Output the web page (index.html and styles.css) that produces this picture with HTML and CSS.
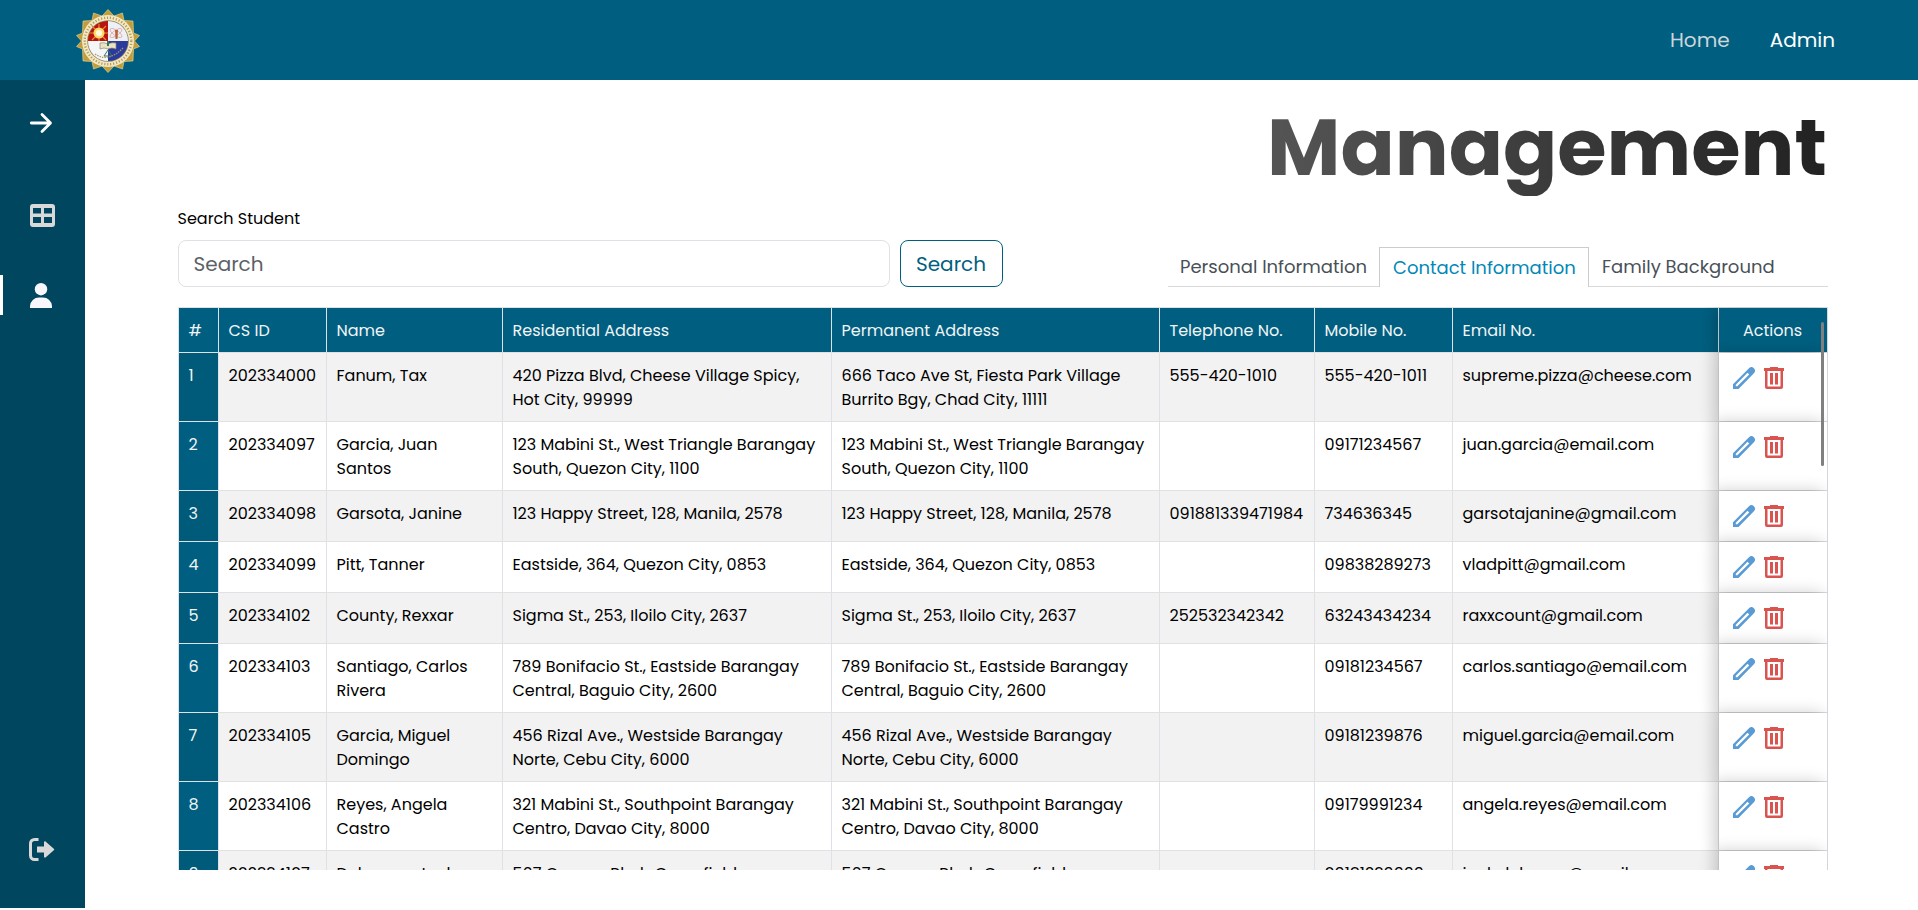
FILE: index.html
```html
<!DOCTYPE html>
<html lang="en">
<head>
<meta charset="utf-8">
<title>Management</title>
<link rel="stylesheet" href="styles.css">
</head>
<body>
<svg class="defs" aria-hidden="true">
  <symbol id="pencil" viewBox="0 0 24 24"><path fill="currentColor" fill-rule="evenodd" d="M1 18.3 17 2.200a3.600 3.600 0 0 1 4.900 0 3.600 3.600 0 0 1 0 5L6.500 23H1ZM3.800 20.200h1.500L17.200 8.500 15.500 6.800 3.800 18.700Z"/></symbol>
  <symbol id="trash" viewBox="0 0 24 24"><path fill="currentColor" fill-rule="evenodd" d="M8 1h8v1h6v3h-1v16a2 2 0 0 1-2 2H5a2 2 0 0 1-2-2V5H2V2h6ZM5.500 5v15.500h13V5ZM8 7h3v11.500H8Zm5 0h3v11.500h-3Z"/></symbol>
</svg>
<header class="topbar">
  <svg class="logo" viewBox="-32 -32 64 64">
    <polygon class="rays" points="0,-31.500 6,-25 14.500,-28 16,-20.500 25,-20 25.500,-8 31.500,-5.500 26.500,0 31.500,5.500 25.500,8 25,20 16,20.500 14.500,28 6,25 0,31.500 -6,25 -14.500,28 -16,20.500 -25,20 -25.500,8 -31.500,5.500 -26.500,0 -31.500,-5.500 -25.500,-8 -25,-20 -16,-20.500 -14.500,-28 -6,-25"/>
    <circle r="26" fill="#f3e8c5"/>
    <circle r="23.300" class="lettering"/>
    <circle r="20.800" fill="#8d8460"/>
    <path d="M0 0H-20A20 20 0 0 1 0-20Z" fill="#b8130c"/>
    <path d="M0 0V-20A20 20 0 0 1 20 0Z" fill="#eef0f5"/>
    <path d="M0 0H20A20 20 0 0 1 0 20Z" fill="#2b3a9d"/>
    <path d="M0 0V20A20 20 0 0 1-20 0Z" fill="#f5f6f8"/>
    <path d="M-9-17V0M-19-8H0M-16-15-2-1M-2-15-16-1" stroke="#e38b35" stroke-width="1.200"/>
    <circle cx="-9" cy="-8" r="5.500" fill="#ffd96e"/><circle cx="-9" cy="-8" r="3" fill="#fffbe0"/>
    <g fill="none" stroke="#dba6a6" stroke-width=".8"><ellipse cx="8" cy="-8" rx="7" ry="2.600" transform="rotate(35 8 -8)"/><ellipse cx="8" cy="-8" rx="7" ry="2.600" transform="rotate(-35 8 -8)"/></g>
    <path d="M7-11h3l-.5 9h-2Z" fill="#b5623a"/>
    <path d="M-8 2Q-4 1 0 3 4 1 8 2V8Q4 6 0 8-4 6-8 8Z" fill="#e9e3c3" stroke="#8b8b68" stroke-width=".7"/>
    <path d="M-1 0h2v5h-2Z" fill="#387460"/>
    <path d="M-4 15 0 9 4 15Z" fill="none" stroke="#387460" stroke-width="1"/>
    <path d="M-13 13Q0 22 15 7" fill="none" stroke="#a69a68" stroke-width="1.200" stroke-dasharray="1.500 1"/>
  </svg>
  <nav class="topnav"><a class="home">Home</a><a class="admin">Admin</a></nav>
</header>
<div class="body">
  <aside class="sidebar">
    <svg class="ico arrow" viewBox="0 0 22 20"><path d="M1.300 10H20M12 1.500 20.500 10 12 18.500" fill="none" stroke="#fff" stroke-width="2.800" stroke-linecap="round" stroke-linejoin="round"/></svg>
    <svg class="ico grid" viewBox="0 0 25 23"><path d="M3 0h19a3 3 0 0 1 3 3v17a3 3 0 0 1-3 3H3a3 3 0 0 1-3-3V3a3 3 0 0 1 3-3ZM3 4v5.500h8V4Zm11 0v5.500h8V4ZM3 13v6h8v-6Zm11 0v6h8v-6Z" fill="#d9d9d9" fill-rule="evenodd"/></svg>
    <div class="current"><svg class="ico" viewBox="0 0 22 25"><circle cx="11" cy="6.200" r="6.200" fill="#f8f8fc"/><path d="M0 25V23A9 9 0 0 1 9 14.500h4A9 9 0 0 1 22 23v2Z" fill="#f8f8fc"/></svg></div>
    <svg class="ico logout" viewBox="0 0 26 23"><path d="M9.500 1.500H5.500a4 4 0 0 0-4 4v12a4 4 0 0 0 4 4h4" fill="none" stroke="#d9d9d9" stroke-width="3"/><path d="M8 8.500h7V4.500c0-1 1-1.500 1.800-.8l8 7a1 1 0 0 1 0 1.600l-8 7c-.8.700-1.800.200-1.800-.8v-4H8Z" fill="#d9d9d9"/></svg>
  </aside>
  <main class="main">
    <h1 class="title"><span>Management</span></h1>
    <div class="tools">
      <div class="search">
        <label class="label" for="q">Search Student</label>
        <div class="row"><input id="q" class="input" placeholder="Search"><button class="btn">Search</button></div>
      </div>
      <div class="tabs"><a class="tab t1">Personal Information</a><a class="tab t2">Contact Information</a><a class="tab t3">Family Background</a></div>
    </div>
    <div class="tablebox">
      <table class="table">
        <colgroup><col class="c1"><col class="c2"><col class="c3"><col class="c4"><col class="c5"><col class="c6"><col class="c7"><col class="c8"><col class="c9"></colgroup>
        <thead><tr><th>#</th><th>CS ID</th><th>Name</th><th>Residential Address</th><th>Permanent Address</th><th>Telephone No.</th><th>Mobile No.</th><th>Email No.</th><th class="act">Actions</th></tr></thead>
        <tbody>
        <tr><th>1</th><td>202334000</td><td>Fanum, Tax</td><td>420 Pizza Blvd, Cheese Village Spicy,<br>Hot City, 99999</td><td>666 Taco Ave St, Fiesta Park Village<br>Burrito Bgy, Chad City, 11111</td><td>555-420-1010</td><td>555-420-1011</td><td>supreme.pizza@cheese.com</td><td class="act"><svg class="edit"><use href="#pencil"/></svg><svg class="del"><use href="#trash"/></svg></td></tr>
        <tr><th>2</th><td>202334097</td><td>Garcia, Juan<br>Santos</td><td>123 Mabini St., West Triangle Barangay<br>South, Quezon City, 1100</td><td>123 Mabini St., West Triangle Barangay<br>South, Quezon City, 1100</td><td></td><td>09171234567</td><td>juan.garcia@email.com</td><td class="act"><svg class="edit"><use href="#pencil"/></svg><svg class="del"><use href="#trash"/></svg></td></tr>
        <tr><th>3</th><td>202334098</td><td>Garsota, Janine</td><td>123 Happy Street, 128, Manila, 2578</td><td>123 Happy Street, 128, Manila, 2578</td><td>091881339471984</td><td>734636345</td><td>garsotajanine@gmail.com</td><td class="act"><svg class="edit"><use href="#pencil"/></svg><svg class="del"><use href="#trash"/></svg></td></tr>
        <tr><th>4</th><td>202334099</td><td>Pitt, Tanner</td><td>Eastside, 364, Quezon City, 0853</td><td>Eastside, 364, Quezon City, 0853</td><td></td><td>09838289273</td><td>vladpitt@gmail.com</td><td class="act"><svg class="edit"><use href="#pencil"/></svg><svg class="del"><use href="#trash"/></svg></td></tr>
        <tr><th>5</th><td>202334102</td><td>County, Rexxar</td><td>Sigma St., 253, Iloilo City, 2637</td><td>Sigma St., 253, Iloilo City, 2637</td><td>252532342342</td><td>63243434234</td><td>raxxcount@gmail.com</td><td class="act"><svg class="edit"><use href="#pencil"/></svg><svg class="del"><use href="#trash"/></svg></td></tr>
        <tr><th>6</th><td>202334103</td><td>Santiago, Carlos<br>Rivera</td><td>789 Bonifacio St., Eastside Barangay<br>Central, Baguio City, 2600</td><td>789 Bonifacio St., Eastside Barangay<br>Central, Baguio City, 2600</td><td></td><td>09181234567</td><td>carlos.santiago@email.com</td><td class="act"><svg class="edit"><use href="#pencil"/></svg><svg class="del"><use href="#trash"/></svg></td></tr>
        <tr><th>7</th><td>202334105</td><td>Garcia, Miguel<br>Domingo</td><td>456 Rizal Ave., Westside Barangay<br>Norte, Cebu City, 6000</td><td>456 Rizal Ave., Westside Barangay<br>Norte, Cebu City, 6000</td><td></td><td>09181239876</td><td>miguel.garcia@email.com</td><td class="act"><svg class="edit"><use href="#pencil"/></svg><svg class="del"><use href="#trash"/></svg></td></tr>
        <tr><th>8</th><td>202334106</td><td>Reyes, Angela<br>Castro</td><td>321 Mabini St., Southpoint Barangay<br>Centro, Davao City, 8000</td><td>321 Mabini St., Southpoint Barangay<br>Centro, Davao City, 8000</td><td></td><td>09179991234</td><td>angela.reyes@email.com</td><td class="act"><svg class="edit"><use href="#pencil"/></svg><svg class="del"><use href="#trash"/></svg></td></tr>
        <tr><th>9</th><td>202334107</td><td>Dela cruz, Jack<br>Santos</td><td>567 Orange Blvd., Greenfield<br>Davao City, 8000</td><td>567 Orange Blvd., Greenfield<br>Davao City, 8000</td><td></td><td>09181239999</td><td>jack.delacruz@email.com</td><td class="act"><svg class="edit"><use href="#pencil"/></svg><svg class="del"><use href="#trash"/></svg></td></tr>
        </tbody>
      </table>
      <div class="thumb"></div>
    </div>
  </main>
</div>
</body>
</html>
```
FILE: styles.css
```css
* { box-sizing: border-box; }
body { margin: 0; height: 910px; overflow: hidden; background: #fff; color: #000; font: 16px/24px Poppins, Inter, sans-serif; }
.defs { display: none; }
.topbar { height: 80px; background: #005f80; display: flex; align-items: center; justify-content: space-between; padding: 0 83px 0 76px; }
.logo { width: 64px; height: 64px; margin-top: 1px; }
.rays { fill: #c39d3c; stroke: #f0dc9a; stroke-width: .6; }
.lettering { fill: none; stroke: #b59b58; stroke-width: 2.4; stroke-dasharray: 1.2 1.8; }
.topnav { display: flex; gap: 40px; font-size: 20px; line-height: 30px; }
.home { color: #ccd5da; }
.admin { color: #fff; }
.body { display: flex; height: 828px; }
.sidebar { flex: none; width: 85px; background: #00465f; display: flex; flex-direction: column; padding: 33px 0 47px; }
.ico { display: block; margin-left: 30px; overflow: visible; }
.arrow { width: 22px; height: 20px; }
.grid { width: 25px; height: 23px; margin-top: 71px; }
.current { height: 40px; margin-top: 48px; border-left: 3px solid #fff; padding-top: 8px; }
.current .ico { width: 22px; height: 25px; margin-left: 27px; }
.logout { width: 26px; height: 23px; margin-top: auto; margin-left: 29px; }
.main { flex: 1; min-width: 0; padding: 32px 90px 0 92.500px; }
.title { margin: 0; height: 84px; display: flex; justify-content: flex-end; font-size: 80px; line-height: 71px; font-weight: 700; padding-right: 1px; }
.title span { background: linear-gradient(90deg, #555, #222); background-clip: text; -webkit-background-clip: text; color: transparent; }
.tools { display: flex; justify-content: space-between; align-items: flex-end; height: 91px; }
.search { width: 825px; }
.label { display: block; margin-bottom: 9px; }
.row { display: flex; gap: 10px; }
.input { flex: 1; height: 47px; border: 1px solid #dee2e6; border-radius: 8px; padding: 0 15px; font: inherit; font-size: 20px; outline: 0; }
.input::placeholder { color: #5d6166; }
.btn { width: 103px; height: 47px; padding: 0; border: 1px solid #005f80; border-radius: 8px; background: #fff; color: #005f80; font: inherit; font-size: 20px; }
.tabs { width: 660px; height: 40px; display: flex; border-bottom: 1px solid #d9d9d9; font-size: 18px; line-height: 40px; color: #495057; }
.tab { height: 40px; white-space: nowrap; }
.t1 { width: 211px; padding-left: 12px; }
.t2 { width: 210px; border: 1px solid #ccc; border-bottom: 0; background: #fff; color: #0088b8; padding-left: 13px; }
.t3 { padding-left: 13px; }
.tablebox { position: relative; width: 1650px; height: 563px; margin-top: 20px; overflow: hidden; }
.table { table-layout: fixed; width: 1650px; border-collapse: collapse; white-space: nowrap; }
.c1 { width: 40px; } .c2 { width: 108px; } .c3 { width: 176px; } .c4 { width: 329px; } .c5 { width: 328px; }
.c6 { width: 155px; } .c7 { width: 138px; } .c8 { width: 266px; } .c9 { width: 109px; }
.table th, .table td { border: 1px solid #dee2e6; padding: 11px 10px 9px; text-align: left; vertical-align: top; font-weight: 400; }
.table th { background: #005f80; color: #f1f4f6; }
.table tbody tr { height: 51px; }
.table tbody tr:nth-child(odd) td { background: #f2f2f2; }
.table tbody tr:nth-child(odd) th { background: #005a79; }
.table .act { position: relative; }
.act::before { content: ""; position: absolute; inset: 0; box-shadow: -5px 0 15px rgba(0, 0, 0, .2); pointer-events: none; }
.table tbody tr td.act { background: #fff !important; padding: 13px 0 0 13px; }
.table thead .act { text-align: center; }
.edit, .del { display: inline-block; vertical-align: top; width: 24px; height: 24px; }
.edit { color: #5b9bd5; }
.del { color: #d9534f; margin-left: 6px; }
.thumb { position: absolute; z-index: 3; right: 4px; top: 15px; width: 3px; height: 144px; border-radius: 2px; background: #808080; }
```
